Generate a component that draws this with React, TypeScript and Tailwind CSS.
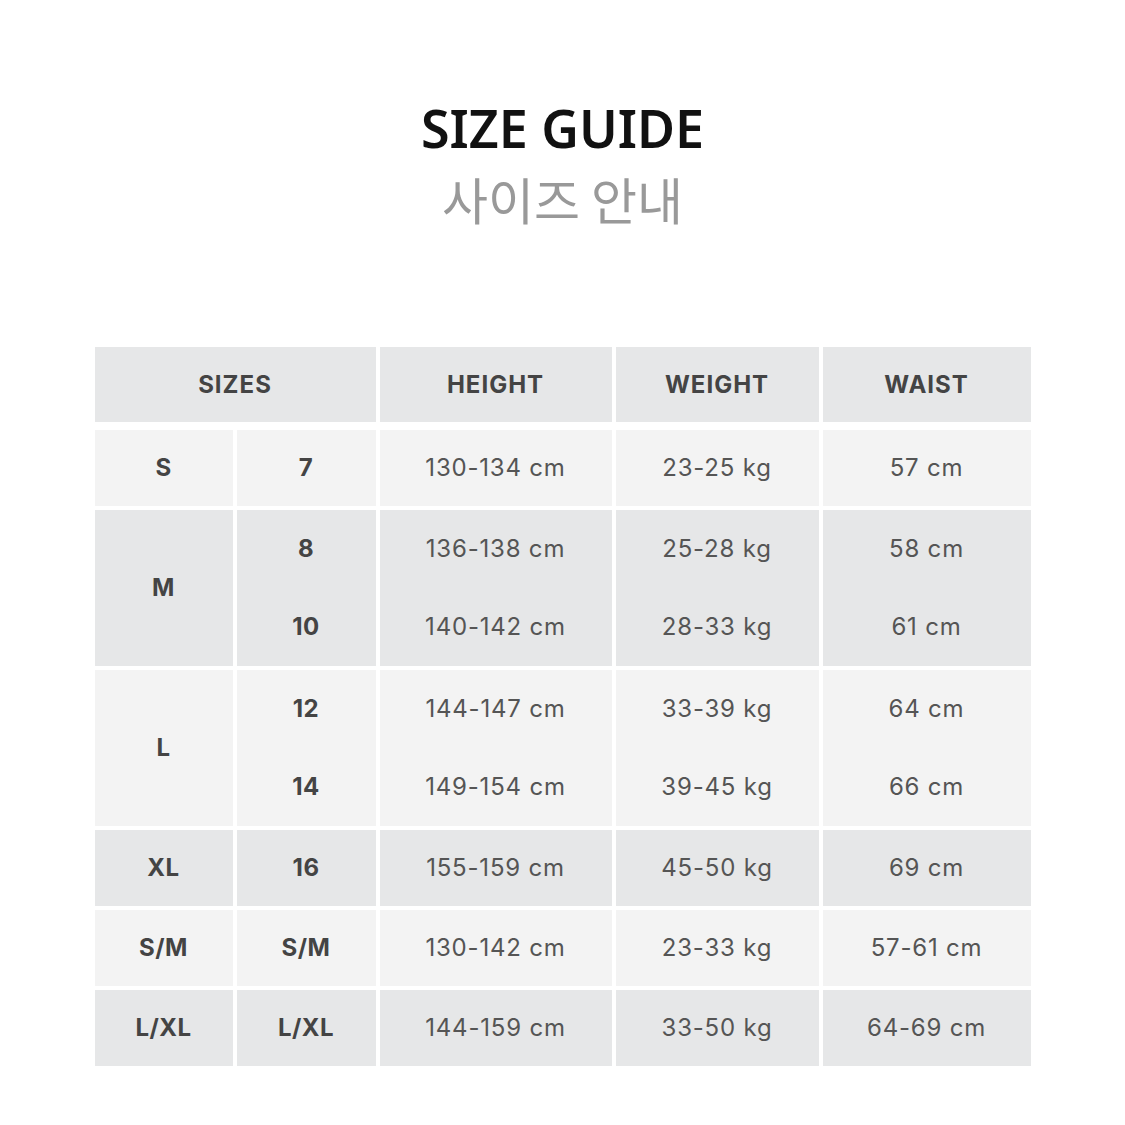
import React from "react";

type Row = {
  size: string;
  tone: "light" | "dark";
  lines: { sub: string; height: string; weight: string; waist: string }[];
};

const rows: Row[] = [
  { size: "S", tone: "light", lines: [{ sub: "7", height: "130-134 cm", weight: "23-25 kg", waist: "57 cm" }] },
  {
    size: "M",
    tone: "dark",
    lines: [
      { sub: "8", height: "136-138 cm", weight: "25-28 kg", waist: "58 cm" },
      { sub: "10", height: "140-142 cm", weight: "28-33 kg", waist: "61 cm" },
    ],
  },
  {
    size: "L",
    tone: "light",
    lines: [
      { sub: "12", height: "144-147 cm", weight: "33-39 kg", waist: "64 cm" },
      { sub: "14", height: "149-154 cm", weight: "39-45 kg", waist: "66 cm" },
    ],
  },
  { size: "XL", tone: "dark", lines: [{ sub: "16", height: "155-159 cm", weight: "45-50 kg", waist: "69 cm" }] },
  { size: "S/M", tone: "light", lines: [{ sub: "S/M", height: "130-142 cm", weight: "23-33 kg", waist: "57-61 cm" }] },
  { size: "L/XL", tone: "dark", lines: [{ sub: "L/XL", height: "144-159 cm", weight: "33-50 kg", waist: "64-69 cm" }] },
];

const cols = "grid grid-cols-[138px_139px_232px_203px_208px] gap-x-[4px]";
const head = "bg-[#e6e7e8] flex items-center justify-center text-[24px] font-bold text-[#444] tracking-[1px]";

function Cell({ bg, bold, items }: { bg: string; bold?: boolean; items: string[] }) {
  return (
    <div className={`${bg} flex flex-col`}>
      {items.map((t, i) => (
        <div
          key={i}
          className={`flex-1 flex items-center justify-center text-[24px] ${
            bold ? "font-bold text-[#444] tracking-[0.5px]" : "text-[#555] tracking-[0.8px]"
          }`}
        >
          {t}
        </div>
      ))}
    </div>
  );
}

export default function App() {
  return (
    <div className="w-[1125px] h-[1125px] bg-white flex flex-col items-center font-['Inter',sans-serif]">
      <h1 className="mt-[98px] text-[52px] leading-[60px] font-semibold text-[#111] font-['Noto_Sans',sans-serif]">
        SIZE GUIDE
      </h1>
      <p className="mt-[10px] text-[50px] leading-[60px] font-normal text-[#999] font-['Noto_Sans_CJK_KR',sans-serif]">
        사이즈 안내
      </p>

      <div className="mt-[119px] flex flex-col gap-y-[4px]">
        <div className={`${cols} h-[75px] mb-[4px]`}>
          <div className={`col-span-2 ${head}`}>SIZES</div>
          <div className={head}>HEIGHT</div>
          <div className={head}>WEIGHT</div>
          <div className={head}>WAIST</div>
        </div>
        {rows.map((r) => {
          const bg = r.tone === "dark" ? "bg-[#e6e7e8]" : "bg-[#f3f3f3]";
          const h = r.lines.length === 2 ? "h-[156px]" : "h-[76px]";
          return (
            <div key={r.size} className={`${cols} ${h}`}>
              <Cell bg={bg} bold items={[r.size]} />
              <Cell bg={bg} bold items={r.lines.map((l) => l.sub)} />
              <Cell bg={bg} items={r.lines.map((l) => l.height)} />
              <Cell bg={bg} items={r.lines.map((l) => l.weight)} />
              <Cell bg={bg} items={r.lines.map((l) => l.waist)} />
            </div>
          );
        })}
      </div>
    </div>
  );
}
